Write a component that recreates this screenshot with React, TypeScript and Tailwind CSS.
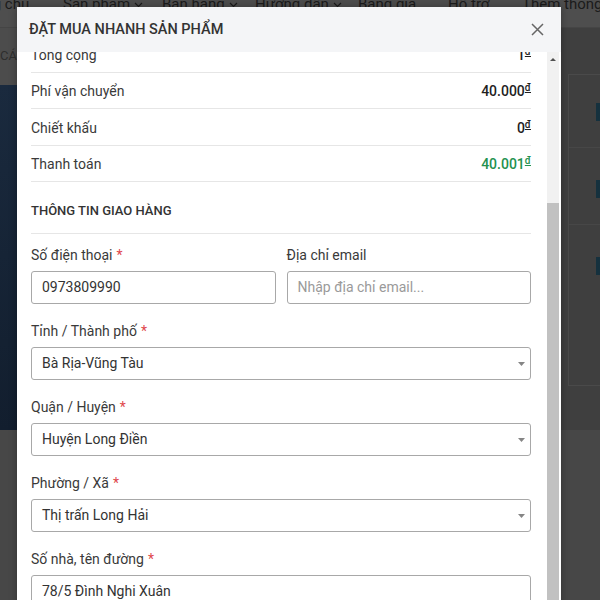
import React from "react";

const Chev = () => (
  <svg width="9" height="6" viewBox="0 0 9 6" className="ml-[4px] mt-[2px]">
    <path d="M1 1l3.5 3.5L8 1" fill="none" stroke="#1b1b1b" strokeWidth="1.2" />
  </svg>
);

const Price = ({ v, green }: { v: string; green?: boolean }) => (
  <span className={green ? "font-medium text-[#23914f]" : "font-medium text-[#1f1f1f]"}>
    {v}
    <sup className="text-[10px] underline">đ</sup>
  </span>
);

const Row = ({ label, children }: { label: string; children: React.ReactNode }) => (
  <div className="flex h-[36.5px] items-center justify-between border-b border-[#e6e6e6] pt-[3px] text-[14px] text-[#3a3a3a]">
    <span>{label}</span>
    {children}
  </div>
);

const Label = ({ text, req }: { text: string; req?: boolean }) => (
  <div className="mb-[6px] pt-[1px] text-[14px] leading-[20px] text-[#3a3a3a]">
    {text}
    {req && <span className="ml-[4px] text-[#e0474c]">*</span>}
  </div>
);

const Input = ({ value, placeholder }: { value?: string; placeholder?: string }) => (
  <div className="flex h-[33px] items-center rounded-[3px] border border-[#a8a8a8] bg-white px-[10px] text-[14px]">
    {value ? <span className="text-[#333]">{value}</span> : <span className="text-[#9a9a9a]">{placeholder}</span>}
  </div>
);

const Select = ({ value }: { value: string }) => (
  <div className="flex h-[33px] items-center justify-between rounded-[3px] border border-[#a8a8a8] bg-white pl-[10px] pr-[5px] text-[14px] text-[#333]">
    <span>{value}</span>
    <svg width="7" height="4" viewBox="0 0 7 4">
      <path d="M0 0h7L3.5 4z" fill="#858585" />
    </svg>
  </div>
);

export default function App() {
  return (
    <div
      className="relative h-[600px] w-[600px] overflow-hidden bg-[#474747]"
      style={{ fontFamily: "Roboto, 'Noto Sans', sans-serif" }}
    >
      {/* background page */}
      <div className="flex h-[28px] items-start overflow-hidden border-b border-[#454545] bg-[#4e4e4e] text-[15px] text-[#1b1b1b]">
        <div className="-mt-[6px] flex leading-[20px]">
          <div className="-ml-[37px] w-[100px] shrink-0">Trang chủ</div>
          <div className="flex w-[99px] shrink-0 items-center">Sản phẩm<Chev /></div>
          <div className="flex w-[93px] shrink-0 items-center">Bán hàng<Chev /></div>
          <div className="flex w-[103px] shrink-0 items-center">Hướng dẫn<Chev /></div>
          <div className="w-[90px] shrink-0">Bảng giá</div>
          <div className="w-[74px] shrink-0">Hỗ trợ</div>
          <div className="shrink-0 whitespace-nowrap">Thêm thông tin</div>
        </div>
      </div>
      <div className="flex">
        <div className="w-[562px]">
          <div className="flex h-[57px] items-center bg-[#4c4c4c] text-[13px] text-[#2e2e2e]">
            <span className="-mt-[2px]">CÁC GÓI</span>
          </div>
          <div className="h-[345px] bg-gradient-to-b from-[#1a2a3e] to-[#121e2e]" />
        </div>
        <div className="flex-1 bg-[#3f3f3f] pt-[46px]">
          <div className="ml-[8px] h-[312px] border-b border-l border-t border-[#4a4a4a]">
            <div className="ml-[27px] mt-[28px] h-[18px] w-[4px] bg-[#15313e]" />
            <div className="mt-[26px] border-t border-[#474747]" />
            <div className="ml-[27px] mt-[32px] h-[18px] w-[4px] bg-[#15313e]" />
            <div className="mt-[26px] border-t border-[#474747]" />
            <div className="ml-[27px] mt-[32px] h-[18px] w-[4px] bg-[#15313e]" />
          </div>
        </div>
      </div>

      {/* modal */}
      <div className="absolute left-[17px] top-[7px] flex h-[600px] w-[544px] flex-col bg-white shadow-[0_0_8px_rgba(0,0,0,0.3)]">
        <div className="flex h-[45px] shrink-0 items-center justify-between bg-[#f4f5f7] pl-[12px] pr-[17px]">
          <span className="text-[14.5px] font-medium text-[#333]">ĐẶT MUA NHANH SẢN PHẨM</span>
          <svg width="13" height="13" viewBox="0 0 13 13">
            <path d="M1 1l11 11M12 1L1 12" stroke="#666" strokeWidth="1.5" />
          </svg>
        </div>
        <div className="flex min-h-0 flex-1">
          <div className="min-w-0 flex-1 overflow-hidden pl-[14px] pr-[16px]">
            <div className="-mt-[16px]">
              <Row label="Tổng cộng">
                <Price v="1" />
              </Row>
              <Row label="Phí vận chuyển">
                <Price v="40.000" />
              </Row>
              <Row label="Chiết khấu">
                <Price v="0" />
              </Row>
              <Row label="Thanh toán">
                <Price v="40.001" green />
              </Row>
              <div className="border-b border-[#e6e6e6] pb-[14px] pt-[21px] text-[13px] font-medium leading-[16px] text-[#333]">
                THÔNG TIN GIAO HÀNG
              </div>
              <div className="pt-[10px]">
                <div className="mb-[16px] grid grid-cols-2 gap-x-[11px]">
                  <div>
                    <Label text="Số điện thoại" req />
                    <Input value="0973809990" />
                  </div>
                  <div>
                    <Label text="Địa chỉ email" />
                    <Input placeholder="Nhập địa chỉ email..." />
                  </div>
                </div>
                <div className="mb-[16px]">
                  <Label text="Tỉnh / Thành phố" req />
                  <Select value="Bà Rịa-Vũng Tàu" />
                </div>
                <div className="mb-[16px]">
                  <Label text="Quận / Huyện" req />
                  <Select value="Huyện Long Điền" />
                </div>
                <div className="mb-[16px]">
                  <Label text="Phường / Xã" req />
                  <Select value="Thị trấn Long Hải" />
                </div>
                <div className="mb-[16px]">
                  <Label text="Số nhà, tên đường" req />
                  <Input value="78/5 Đình Nghi Xuân" />
                </div>
              </div>
            </div>
          </div>
          <div className="mr-[2px] flex w-[12px] shrink-0 flex-col bg-[#f1f1f1]">
            <div className="flex h-[14px] items-center justify-center">
              <svg width="6" height="3" viewBox="0 0 6 3">
                <path d="M0 3h6L3 0z" fill="#505050" />
              </svg>
            </div>
            <div className="h-[137px]" />
            <div className="flex-1 bg-[#c1c1c1]" />
          </div>
        </div>
      </div>
    </div>
  );
}
